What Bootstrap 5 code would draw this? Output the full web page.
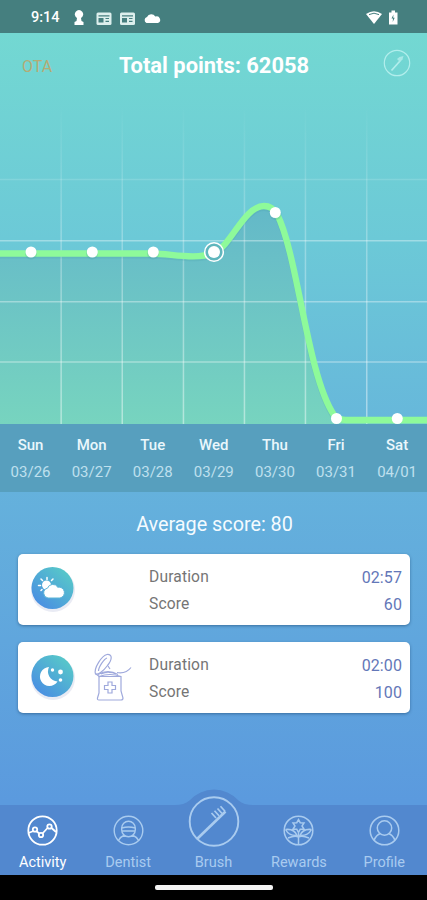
<!DOCTYPE html>
<html lang="en">
<head>
<meta charset="utf-8">
<meta name="viewport" content="width=device-width, initial-scale=1">
<title>Activity</title>
<link href="https://cdn.jsdelivr.net/npm/bootstrap@5.3.0/dist/css/bootstrap.min.css" rel="stylesheet">
<style>
body{font-family:Roboto,sans-serif;background:#000;overflow:hidden}
svg{display:block;flex:none}
.screen{width:427px;height:900px;background:linear-gradient(#73d8d2 33px,#6cc9d7 240px,#65b2dc 480px,#5b9ade 800px)}
.status{height:33px;background:#457f7f;padding:2px 28px 0 31px}
.clock{font-size:14.5px;font-weight:500;letter-spacing:0;width:41px}
.topbar{height:67px;padding:0 16px 0 22px}
.ota{color:#b5ab75;font-size:16px;width:55px}
.total{font-size:21.9px;font-weight:700}
.brushlink{width:60px}
.days{height:68px;background:#579fbe;padding-top:11px}
.day{width:61.1px;flex:none}
.dname{font-size:15px;line-height:20px;font-weight:500;color:#eaf7fc}
.ddate{font-size:15px;line-height:20px;margin-top:7px;color:#bfe0ee}
.avg{height:62px;padding:4px 0 0 2px;font-size:19.8px;color:#f4fbff}
.session{height:71px;margin:0 17px 17px 18px;border-radius:5px;padding:1px 8px 0 11px;box-shadow:0 1px 3px rgba(20,60,100,.5)}
.kit{width:72px}
.facts{font-size:15.6px;line-height:27px;color:#757575;letter-spacing:.15px;padding-top:2px}
.val{color:#6377b8;font-size:16px;letter-spacing:.1px}
.tabs{height:70px;background:#5288cf;color:#a9cbef}
.tab{width:85.5px;height:70px;padding-bottom:2px;font-size:14.5px;line-height:20px}
.tab svg{margin-bottom:7px}
.tab .bigicon{margin-bottom:-4px}
.tab.on{color:#fff}
.homebar{height:25px;background:#000}
.pill{width:118px;height:5px;background:#f4f4f4;border-radius:2px}
</style>
<script src="https://cdn.jsdelivr.net/npm/bootstrap@5.3.0/dist/js/bootstrap.bundle.min.js"></script>
</head>
<body>
<div class="screen d-flex flex-column">
  <div class="status d-flex align-items-center text-white">
    <span class="clock">9:14</span>
    <svg width="90" height="18" viewBox="0 0 90 18" fill="#fff">
      <path d="M2.500 16v-3l2-1 .5-3A4.200 4.200 0 1 1 9 9l.5 3 2 1v3z"/>
      <g id="cardicon"><rect x="24.500" y="3.500" width="15" height="12.500" rx="1.500" fill="#dcefed"/><path d="M26.500 6.800h11M33.500 9.500H37M33.500 12.300H37" stroke="#457f7f" stroke-width="1.200"/><rect x="26.500" y="9" width="5" height="4.500" fill="#457f7f"/></g>
      <use href="#cardicon" x="23.500"/>
      <path d="M74.500 14a3.200 3.200 0 0 1 .5-6 4.700 4.700 0 0 1 8.300-.4 3.400 3.400 0 0 1 2.700 6.400z"/>
    </svg>
    <svg class="ms-auto" width="34" height="18" viewBox="0 0 34 18">
      <path d="M1 5Q9-.5 17 5L9 15z" fill="#fff"/><path d="M4 5.600Q9 2.800 14 5.600" stroke="#457f7f" fill="none" stroke-width="1"/>
      <path d="M24 3.500h2.500V1.500h3.500v2h2.500v12H24z" fill="#fff"/><path d="M28.500 5.500 26.500 9.500h1.500l-.3 3.500 2-4.300h-1.500z" fill="#457f7f"/>
    </svg>
  </div>
  <header class="topbar d-flex align-items-center justify-content-between text-white">
    <span class="ota">OTA</span>
    <span class="total">Total points: 62058</span>
    <span class="brushlink d-flex justify-content-end mb-2">
      <svg width="28" height="28" viewBox="0 0 28 28" fill="none" stroke="#b2eeec" stroke-width="1.200"><circle cx="14" cy="14" r="12.700"/><path d="M8.500 21.500 17 12" stroke-width="1.700"/><path d="m14 10 2.500-2 4-1-1 3.500-2.500 2.500z" fill="#a8e9e7" stroke="none"/></svg>
    </span>
  </header>

  <svg width="427" height="324" viewBox="0 100 427 324">
    <defs>
      <linearGradient id="area" gradientUnits="userSpaceOnUse" x1="0" y1="204" x2="0" y2="424"><stop stop-color="#63b8c8"/><stop offset=".25" stop-color="#69bfc7"/><stop offset="1" stop-color="#77d4bf"/></linearGradient>
      <linearGradient id="fade" gradientUnits="userSpaceOnUse" x1="0" y1="105" x2="0" y2="424"><stop stop-color="#fff" stop-opacity="0"/><stop offset=".4" stop-color="#fff" stop-opacity=".27"/><stop offset="1" stop-color="#fff" stop-opacity=".45"/></linearGradient>
    </defs>
    <path fill="url(#area)" d="M0 253H153C175 253 196 260 214 253C231 246 244 206 264 206C269 206 274 209 277 214C298 255 307 375 334 415Q339 420 346 420H427V424H0Z"/>
    <path fill="url(#fade)" d="M60.400 105h1.500V424h-1.500zM121.500 105h1.500V424h-1.500zM182.700 105h1.500V424h-1.500zM243.700 105h1.500V424h-1.500zM304.700 105h1.500V424h-1.500zM366 105h1.500V424H366z"/>
    <path stroke="#fff" stroke-opacity=".14" stroke-width="1.300" d="M0 179.500H427"/>
    <path stroke="#fff" stroke-opacity=".36" stroke-width="1.500" d="M0 240.700H427M0 301.700H427M0 362H427"/>
    <path fill="none" stroke="#459aa2" stroke-opacity=".18" stroke-width="6" transform="translate(0 2)" d="M0 253.500H153C175 254 196 260 214 253C231 246 244 206 264 206C269 206 274 209 277 214C298 255 307 375 334 415"/>
    <path fill="none" stroke="#8efa9a" stroke-width="6.300" stroke-linejoin="round" d="M0 253.500H153C173 254 195 260 214 253C231 246 244 206 264 206C269 206 274 209 277 214C298 255 307 375 334 415Q339 420 346 420H427"/>
    <g fill="#4b9ba7" fill-opacity=".25"><circle cx="31" cy="253.500" r="6"/><circle cx="92" cy="253.500" r="6"/><circle cx="153" cy="253.500" r="6"/><circle cx="275.500" cy="214" r="6"/></g>
    <g fill="#fff"><circle cx="31" cy="252" r="5.500"/><circle cx="92.300" cy="252" r="5.500"/><circle cx="153.300" cy="252" r="5.500"/><circle cx="275.300" cy="212.500" r="5.500"/><circle cx="336.500" cy="418.500" r="5.500"/><circle cx="397.300" cy="418.500" r="5.500"/></g>
    <circle cx="214" cy="252" r="9.300" fill="#60b6bd" stroke="#fff" stroke-width="1.500"/><circle cx="214" cy="252" r="6" fill="#fff"/>
  </svg>

  <div class="days d-flex text-center">
    <div class="day"><div class="dname">Sun</div><div class="ddate">03/26</div></div>
    <div class="day"><div class="dname">Mon</div><div class="ddate">03/27</div></div>
    <div class="day"><div class="dname">Tue</div><div class="ddate">03/28</div></div>
    <div class="day"><div class="dname">Wed</div><div class="ddate">03/29</div></div>
    <div class="day"><div class="dname">Thu</div><div class="ddate">03/30</div></div>
    <div class="day"><div class="dname">Fri</div><div class="ddate">03/31</div></div>
    <div class="day"><div class="dname">Sat</div><div class="ddate">04/01</div></div>
  </div>

  <div class="avg d-flex align-items-center justify-content-center">Average score: 80</div>

  <section class="session d-flex align-items-center bg-white">
    <svg width="48" height="50" viewBox="0 0 48 50">
      <defs><linearGradient id="disc" x1=".85" y1=".1" x2=".15" y2=".9"><stop stop-color="#57c8c9"/><stop offset="1" stop-color="#4a8fe2"/></linearGradient></defs>
      <circle cx="24" cy="25" r="22" fill="#e9ebf4"/><circle cx="23.500" cy="23" r="21" fill="url(#disc)"/>
      <circle cx="17.500" cy="20" r="4.500" fill="#fff"/><path d="M18 12.500v2M12 14l1.500 1.500M9.500 20.500h2M24 14l-1.500 1.500M12 25.500l1-1" stroke="#fff" stroke-width="1.500" stroke-linecap="round"/>
      <path d="M19 33a5 5 0 0 1-.5-9.800 5.700 5.700 0 0 1 10.300-1 5.500 5.500 0 1 1 2.200 10.800z" fill="#fff" stroke="#5ab4d7" stroke-width="1"/>
    </svg>
    <span class="kit"></span>
    <div class="facts flex-grow-1">
      <div class="d-flex justify-content-between"><span>Duration</span><span class="val">02:57</span></div>
      <div class="d-flex justify-content-between"><span>Score</span><span class="val">60</span></div>
    </div>
  </section>

  <section class="session d-flex align-items-center bg-white">
    <svg width="48" height="50" viewBox="0 0 48 50">
      <circle cx="24" cy="25" r="22" fill="#e9ebf4"/><circle cx="23.500" cy="23" r="21" fill="url(#disc)"/>
      <path d="M20 14a9.500 9.500 0 1 0 8.500 14.500A10 10 0 0 1 20 14z" fill="#fff"/><g fill="#fff"><circle cx="23.500" cy="17" r="1.700"/><circle cx="31.500" cy="19" r="2.400"/><circle cx="31.500" cy="27" r="1.800"/></g>
    </svg>
    <div class="kit d-flex ps-3">
      <svg width="40" height="50" viewBox="0 0 40 50" fill="none" stroke="#9fa9dc" stroke-width="1.200">
        <path d="M2.500 21C.5 15 9 2.500 14 1.500 20 1 19 7 14.500 12.500 10.500 18 5 22 2.500 21z"/><path d="M5.500 18C5.500 14 11 6 14 5M3 21l4 3M15 13l2 3M5 21.500q10-6 20 0M8 21q8-3 15 0M24 19.500q9 1.500 14-5"/>
        <path d="M6 23.500H28V38l2 7q0 2-2 2H6q-2 0-1.500-2L6 40zM6 23.500q11-4 22 0"/><path d="M15 29h4v3.500H22.500v4H19V40h-4v-3.500H11.500v-4H15z"/>
      </svg>
    </div>
    <div class="facts flex-grow-1">
      <div class="d-flex justify-content-between"><span>Duration</span><span class="val">02:00</span></div>
      <div class="d-flex justify-content-between"><span>Score</span><span class="val">100</span></div>
    </div>
  </section>

  <nav class="tabs d-flex mt-auto">
    <div class="tab on d-flex flex-column align-items-center justify-content-end">
      <svg width="31" height="31" viewBox="0 0 31 31" fill="none" stroke="currentColor" stroke-width="1.800"><circle cx="15.500" cy="15.500" r="14.200"/><path d="M1.500 18l5-2M9.300 16l3.500 3M15.500 18.500l5.500-6M24.500 13l4.500 4"/><circle cx="8" cy="14.500" r="2.200"/><circle cx="14" cy="20" r="2.200"/><circle cx="22.500" cy="11.500" r="2.200"/></svg>Activity</div>
    <div class="tab d-flex flex-column align-items-center justify-content-end">
      <svg width="31" height="31" viewBox="0 0 31 31" fill="none" stroke="currentColor" stroke-width="1.400"><circle cx="15.500" cy="15.500" r="14.300"/><path d="M8.700 13a6.800 6.800 0 0 1 13.600 0v2a6.800 6.800 0 0 1-13.600 0zM8.700 13q6.800-2 13.600 0M9 16h13M5 26q2-4 6.500-6M26 26q-2-4-6.500-6"/></svg>Dentist</div>
    <div class="tab d-flex flex-column align-items-center justify-content-end">
      <svg class="bigicon" width="84" height="72" viewBox="0 0 84 72"><path d="M3 20Q12 20 17.500 15.500A33 33 0 0 1 66.500 15.500Q72 20 81 20V72H3z" fill="#5288cf"/><g fill="none" stroke="#a9cbef"><circle cx="42" cy="36.500" r="24.300" stroke-width="1.900"/><path d="M25 54 53.500 26.500" stroke-width="2.600"/><path d="m39.500 28 4.500 5M42.500 25.800l4.500 5M45.500 23.500l4.500 5M48.500 21.300l4.500 5" stroke-width="1.700"/></g></svg>Brush</div>
    <div class="tab d-flex flex-column align-items-center justify-content-end">
      <svg width="31" height="31" viewBox="0 0 31 31" fill="none" stroke="currentColor" stroke-width="1.500"><circle cx="15.500" cy="15.500" r="14.300"/><path d="m15.500 4.500 1.700 3.200 3.800.2-2 3.100 2 3.100-3.800.2-1.700 3.200-1.700-3.200-3.800-.2 2-3.100-2-3.100 3.800-.2zM15.500 18v12M2.500 14.500q9-1 11.500 6Q6 21 2.500 14.500M28.500 14.500q-9-1-11.500 6 8 .5 11.500-6M5 23q7-3 10.500-1 3.500-2 10.500 1"/></svg>Rewards</div>
    <div class="tab d-flex flex-column align-items-center justify-content-end">
      <svg width="31" height="31" viewBox="0 0 31 31" fill="none" stroke="currentColor" stroke-width="1.500"><circle cx="15.500" cy="15.500" r="14.300"/><circle cx="15.500" cy="13" r="7.200"/><path d="M5 25.500q2-5.500 6.500-7M26 25.500q-2-5.500-6.500-7"/></svg>Profile</div>
  </nav>
  <div class="homebar d-flex align-items-center justify-content-center"><div class="pill"></div></div>
</div>
</body>
</html>
